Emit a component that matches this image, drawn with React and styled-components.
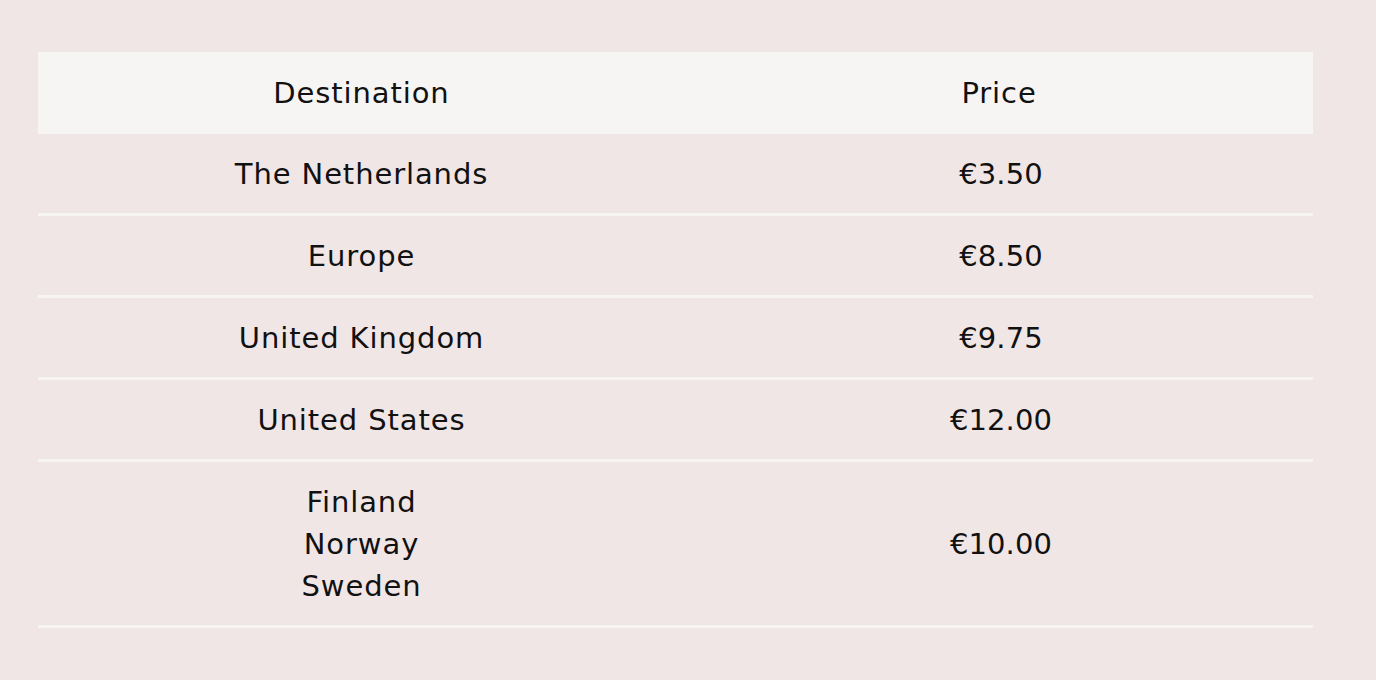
import styled, { createGlobalStyle } from "styled-components";

const rates = [
  { dest: ["The Netherlands"], price: "€3.50" },
  { dest: ["Europe"], price: "€8.50" },
  { dest: ["United Kingdom"], price: "€9.75" },
  { dest: ["United States"], price: "€12.00" },
  { dest: ["Finland", "Norway", "Sweden"], price: "€10.00" },
];

function App() {
  return (
    <Page>
      <GlobalStyle />
      <Table>
        <HeadRow>
          <Cell>Destination</Cell>
          <Cell>Price</Cell>
        </HeadRow>
        {rates.map((r) => (
          <Row key={r.price}>
            <Cell>
              {r.dest.map((d) => (
                <div key={d}>{d}</div>
              ))}
            </Cell>
            <PriceCell>{r.price}</PriceCell>
          </Row>
        ))}
      </Table>
    </Page>
  );
}

const GlobalStyle = createGlobalStyle`
  body {
    margin: 0;
    background: #f1e6e6;
    font-family: "DejaVu Sans", "Noto Sans", sans-serif;
    color: #111;
  }
`;

const Page = styled.div`
  padding: 52px 63px 40px 38px;
`;

const Table = styled.div`
  width: 1275px;
`;

const Row = styled.div`
  display: grid;
  grid-template-columns: 647px 1fr;
  align-items: center;
  padding: 19px 0 18px;
  border-bottom: 3px solid #f7f5f4;
`;

const HeadRow = styled(Row)`
  background: #f7f5f4;
  border-bottom: none;
  padding: 20px 0;
`;

const Cell = styled.div`
  text-align: center;
  font-size: 29px;
  line-height: 42px;
  letter-spacing: 0.9px;
`;

const PriceCell = styled(Cell)`
  letter-spacing: 0.1px;
  padding-left: 4px;
`;

export default App;
